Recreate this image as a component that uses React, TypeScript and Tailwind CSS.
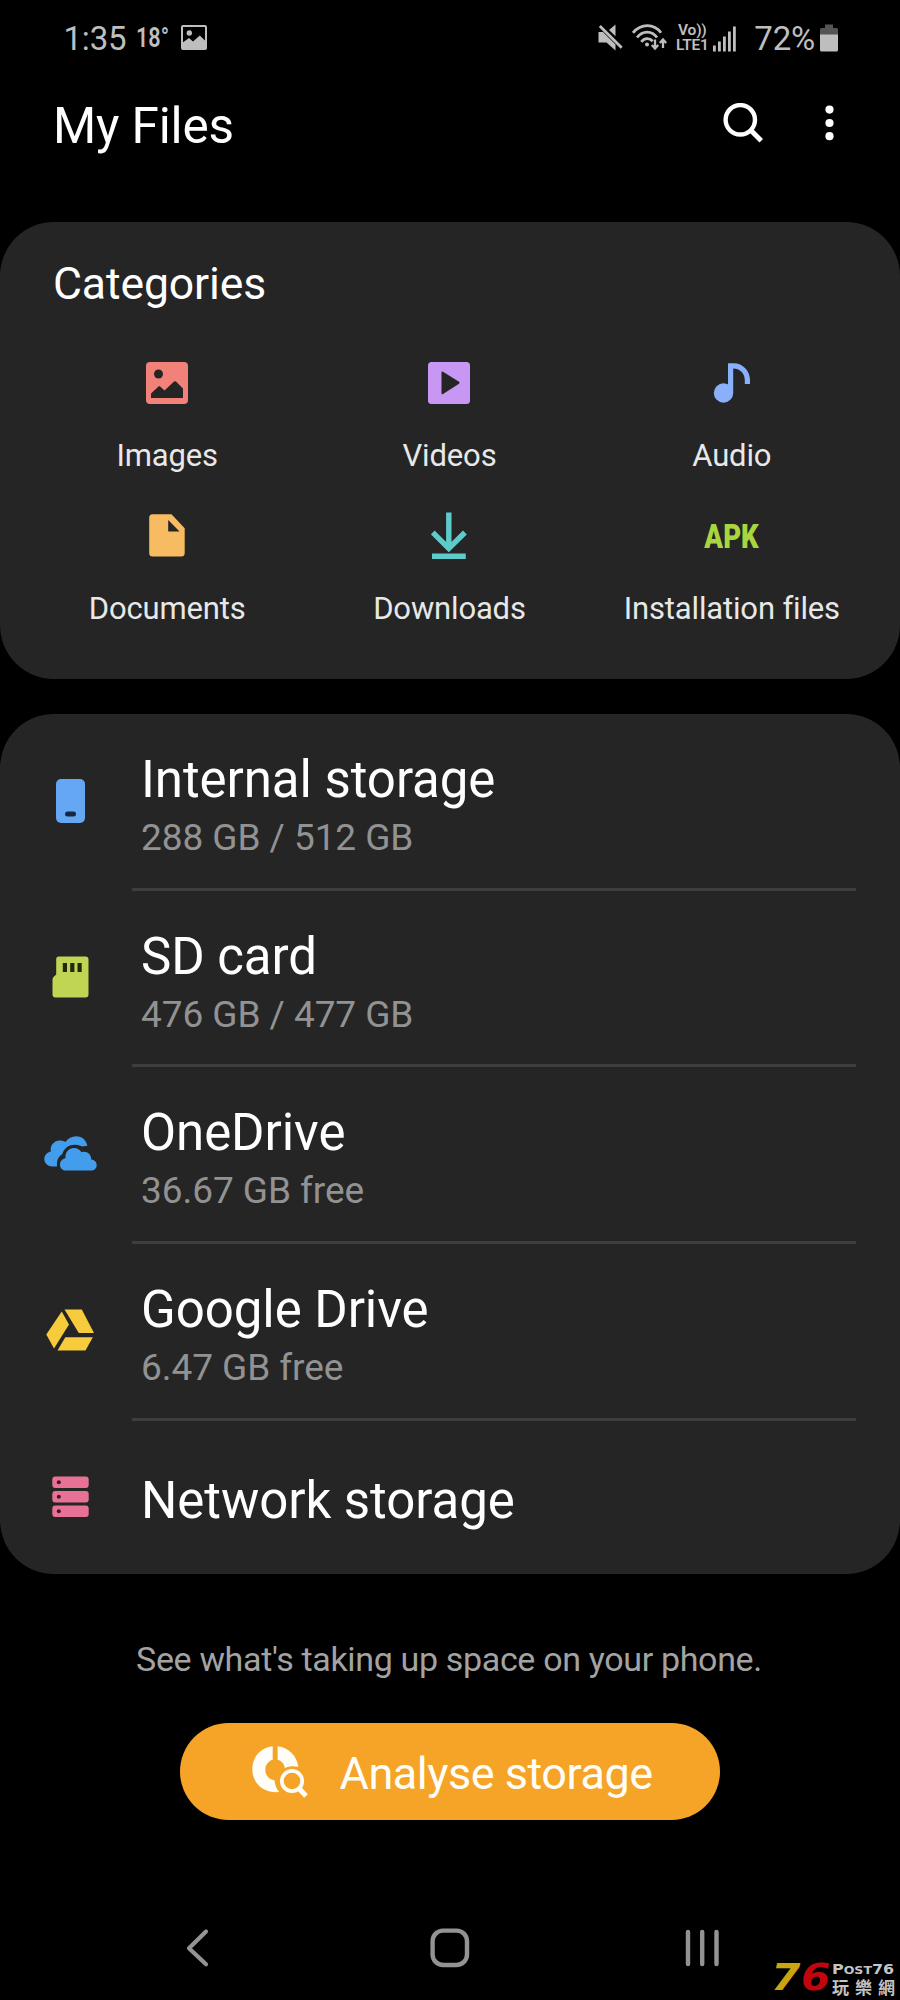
import type { ReactNode } from 'react'

const categories: { label: string; icon: ReactNode }[] = [
  { label: 'Images', icon: <ImagesIcon /> },
  { label: 'Videos', icon: <VideosIcon /> },
  { label: 'Audio', icon: <AudioIcon /> },
  { label: 'Documents', icon: <DocumentsIcon /> },
  { label: 'Downloads', icon: <DownloadsIcon /> },
  {
    label: 'Installation files',
    icon: (
      <span className="inline-block origin-center scale-x-[0.81] text-[34px] leading-none font-black text-[#a9d63e]">
        APK
      </span>
    ),
  },
]

const storages: { name: string; detail: string; icon: ReactNode }[] = [
  { name: 'Internal storage', detail: '288 GB / 512 GB', icon: <PhoneIcon /> },
  { name: 'SD card', detail: '476 GB / 477 GB', icon: <SdCardIcon /> },
  { name: 'OneDrive', detail: '36.67 GB free', icon: <OneDriveIcon /> },
  { name: 'Google Drive', detail: '6.47 GB free', icon: <GoogleDriveIcon /> },
]

function ImagesIcon() {
  return (
    <svg width="42" height="42" viewBox="0 0 42 42">
      <rect width="42" height="42" rx="4" fill="#f28279" />
      <circle cx="12.5" cy="12" r="4.5" fill="#252525" />
      <path
        d="M5 36V31.5L12.5 24.5Q13.3 23.7 14.2 24.5L18.5 28.5L28 19.6Q29 18.7 30 19.6L37 26.5V36Z"
        fill="#252525"
      />
    </svg>
  )
}

function VideosIcon() {
  return (
    <svg width="42" height="42" viewBox="0 0 42 42">
      <rect width="42" height="42" rx="3.5" fill="#c797f3" />
      <path
        d="M13.5 10.5Q13.5 9 15 9.8L31 19.8Q32.2 20.8 31 21.8L15 32Q13.5 32.8 13.5 31.2Z"
        fill="#252525"
      />
    </svg>
  )
}

function AudioIcon() {
  return (
    <svg width="38" height="40" viewBox="0 0 38 40">
      <circle cx="10.5" cy="30" r="9.7" fill="#8ab0fc" />
      <path
        d="M15 30V0.3H20.5C30 0.3 37 8 37 17V21H31.8V17C31.8 10.5 27 5.6 20.2 5.6V30Z"
        fill="#8ab0fc"
      />
    </svg>
  )
}

function DocumentsIcon() {
  return (
    <svg width="36" height="43" viewBox="0 0 36 43">
      <path
        d="M3.5 0.3H22.5L35.7 14.3V39Q35.7 42.5 32.2 42.5H3.5Q0.2 42.5 0.2 39V3.8Q0.2 0.3 3.5 0.3ZM19.2 6V17.5H30.5Z"
        fill="#f7bb61"
        fillRule="evenodd"
      />
    </svg>
  )
}

function DownloadsIcon() {
  return (
    <svg width="36" height="48" viewBox="0 0 36 48" fill="none" stroke="#5ecbcb" strokeWidth="5.4">
      <path d="M17.8 0.5V37M1.7 20.5L17.8 36.5L33.9 20.5" />
      <path d="M1 44.3H34.8" />
    </svg>
  )
}

function PhoneIcon() {
  return (
    <svg className="translate-y-px" width="29" height="44" viewBox="0 0 29 44">
      <rect width="29" height="44" rx="5" fill="#66a7f3" />
      <rect x="9" y="32.5" width="11" height="5" rx="2.5" fill="#16283f" />
    </svg>
  )
}

function SdCardIcon() {
  return (
    <svg width="37" height="42" viewBox="0 0 37 42">
      <path
        d="M7 0.5H33.5Q36.5 0.5 36.5 3.5V38.5Q36.5 41.5 33.5 41.5H3.5Q0.5 41.5 0.5 38.5V23.5Q0.5 22 1.5 21L4.2 18.6V3.3Q4.2 0.5 7 0.5Z"
        fill="#c0d553"
      />
      <path d="M10.8 7H15V16H10.8ZM18.2 7H22.4V16H18.2ZM25.5 7H29.7V16H25.5Z" fill="#25280f" />
    </svg>
  )
}

function OneDriveIcon() {
  return (
    <svg width="53" height="35" viewBox="0 0 53 35">
      <path
        d="M8.5 30.5C3.8 30.5 0.3 27.3 0.3 23C0.3 19.2 3 16.2 6.8 15.4C5.8 9.5 10 4.5 15.8 4.5C17.8 4.5 19.8 5 21.5 6C24 2.4 28 0.3 32.2 0.3C38 0.3 42.7 4.3 43.3 10.3C41 9.8 39.5 10 38.2 10.6C30.5 6.8 21 8.8 18.2 18.3C14.5 20.3 12.5 24.5 13 30.5Z"
        fill="#429eec"
      />
      <path
        d="M21.5 34.6C18.3 34.6 16 32 16 28.8C16 25.4 18.2 22.8 21.5 22.3C20.8 16.5 24.8 12.1 30 12.1C33.2 12.1 36 13.7 37.5 16.3C42 14.6 47.3 17.5 47.3 23.6C50.5 24 52.7 26.2 52.7 29.2C52.7 32.3 50.2 34.6 47 34.6Z"
        fill="#429eec"
      />
    </svg>
  )
}

function GoogleDriveIcon() {
  return (
    <svg className="-translate-x-px" width="48" height="42" viewBox="0 0 48 42" fill="#f7cc3c">
      <path d="M18.5 0.4H35.8L48 24H32.8Z" />
      <path d="M15.7 2.5L23 15.4L8 39.5L0.3 25.5Z" />
      <path d="M19.3 28.2H46.8L39.5 41.5H11.5Z" />
    </svg>
  )
}

function NetworkIcon() {
  return (
    <svg width="37" height="42" viewBox="0 0 37 42">
      {[0.5, 15, 29.5].map((y) => (
        <g key={y}>
          <rect x="0.3" y={y} width="36.4" height="11.5" rx="3" fill="#e87296" />
          <circle cx="6.8" cy={y + 5.7} r="2" fill="#4a1024" />
        </g>
      ))}
    </svg>
  )
}

function AnalyseIcon() {
  return (
    <svg width="56" height="52" viewBox="0 0 56 52">
      <path
        d="M20.7 0.3V13.8C16.3 15 13.3 19 13.3 23.7C13.3 29.5 17.6 33.7 22.5 34.3C22.8 38.7 24.5 42.8 27.3 46C12 47.5 0.3 37.5 0.3 23.2C0.3 10.8 9 1.5 20.7 0.3Z"
        fill="#fffdf8"
      />
      <path
        d="M25.6 0.3C36.8 1.5 45 10 46.3 20.8C41 19.8 36.3 20.3 32.8 22.2C32.3 17.8 29.5 14.8 25.6 13.8Z"
        fill="#fffdf8"
      />
      <circle cx="40" cy="35" r="10.2" fill="none" stroke="#fffdf8" strokeWidth="3.8" />
      <path d="M46.6 42L54 50" stroke="#fffdf8" strokeWidth="5" />
    </svg>
  )
}

function StatusBar() {
  return (
    <div className="flex h-[77px] items-center pr-[62px] pl-[63.5px] text-[#bebebe]">
      <span className="text-[33px] leading-none tracking-[-0.2px]">1:35</span>
      <span className="ml-[10px] w-[34px] origin-left scale-x-[0.8] text-[27px] leading-none font-semibold">
        18°
      </span>
      <svg className="ml-[10.5px] -translate-y-px" width="26" height="25" viewBox="0 0 26 25">
        <rect x="1" y="1" width="24" height="23" rx="1" fill="none" stroke="#bebebe" strokeWidth="2" />
        <circle cx="8.3" cy="8" r="2.7" fill="#bebebe" />
        <path d="M1 18L8 13L12 16.5L18.8 10.5L25 16.5V24H1Z" fill="#bebebe" />
      </svg>

      <div className="ml-auto flex items-center">
        <svg className="-translate-y-px" width="25" height="27" viewBox="0 0 25 27" fill="#bebebe">
          <path d="M0.5 8H5L17.5 20.5V26.5L8.5 18.5H0.5Z" />
          <path d="M17.5 0.5V12.2L11 6Z" />
          <path d="M1.8 2L23.7 23.8" stroke="#bebebe" strokeWidth="2.8" />
        </svg>
        <svg className="ml-[9px] -translate-y-px" width="35" height="27" viewBox="0 0 35 27" fill="none" stroke="#bebebe" strokeWidth="2.8">
          <path d="M1 8.8C9 -0.8 22 -0.8 29 8.8" />
          <path d="M5 13.5C10.5 6.2 20 6.2 25 13.5" />
          <path d="M9.3 17.8C12.5 13.6 17.5 13.6 20.7 17.2" />
          <circle cx="15" cy="20.5" r="1" strokeWidth="2" />
          <path d="M23 15.5V24.5M19.8 21L23 24.5L26.2 21M31 24V15.5M27.8 19L31 15.5L34.2 19" strokeWidth="2.3" />
        </svg>
        <div className="ml-[8px] flex w-[34px] -translate-y-px flex-col items-center text-[15.5px] leading-[14.5px] font-semibold tracking-[-0.2px]">
          <span>Vo))</span>
          <span>LTE1</span>
        </div>
        <svg className="ml-[4px]" width="23" height="26" viewBox="0 0 23 26" fill="#bebebe">
          <rect x="0" y="19.5" width="2.8" height="6" />
          <rect x="5" y="15.5" width="2.8" height="10" />
          <rect x="10" y="10.5" width="2.8" height="15" />
          <rect x="15" y="5.5" width="2.8" height="20" />
          <rect x="20" y="0.5" width="2.8" height="25" />
        </svg>
        <span className="ml-[18px] text-[33px] leading-none tracking-[-0.2px]">72%</span>
        <svg className="ml-[5px] -translate-y-px" width="18" height="28" viewBox="0 0 18 28">
          <path d="M5 0.5H13V4H16.5Q18 4 18 5.5V11H0V5.5Q0 4 1.5 4H5Z" fill="#555" />
          <path d="M0 10.5H18V26Q18 27.5 16.5 27.5H1.5Q0 27.5 0 26Z" fill="#bebebe" />
        </svg>
      </div>
    </div>
  )
}

function Header() {
  return (
    <header className="flex h-[145px] items-start pr-[66px] pl-[53px]">
      <h1 className="mt-[18.5px] text-[49.5px] leading-[60px] tracking-[-0.15px]">My Files</h1>
      <svg className="mt-[26px] ml-auto" width="40" height="40" viewBox="0 0 40 40" fill="none" stroke="#fff">
        <circle cx="17.3" cy="16.8" r="14.7" strokeWidth="4.4" />
        <path d="M27.8 27.3L38.3 37.8" strokeWidth="5" />
      </svg>
      <svg className="mt-[28px] ml-[62px]" width="9" height="36" viewBox="0 0 9 36" fill="#fff">
        <circle cx="4.5" cy="4.6" r="4.1" />
        <circle cx="4.5" cy="18" r="4.1" />
        <circle cx="4.5" cy="31.2" r="4.1" />
      </svg>
    </header>
  )
}

function Watermark() {
  return (
    <div className="absolute right-[5px] bottom-0 flex h-[44px] w-[124px] items-end">
      <div className="flex w-[61px] font-['DejaVu_Sans',sans-serif] text-[37px] leading-[44px] font-bold whitespace-nowrap italic">
        <span className="w-[29.5px] origin-left scale-x-[1.14] text-[#cda410]">7</span>
        <span className="w-[26px] origin-left scale-x-[1.14] text-[#c1070d]">6</span>
      </div>
      <div className="flex w-[63px] flex-col pb-[5px] text-[#c4c4c4]">
        <span className="w-[56px] origin-left scale-x-[1.14] font-['DejaVu_Sans',sans-serif] text-[14px] leading-[15px] font-bold whitespace-nowrap">
          P<span className="text-[11px]">OST</span>76
        </span>
        <span className="flex justify-between font-['Noto_Sans_CJK_TC',sans-serif] text-[17px] leading-[17px] font-bold">
          <span>玩</span>
          <span>樂</span>
          <span>網</span>
        </span>
      </div>
    </div>
  )
}

function App() {
  return (
    <div className="relative flex h-[2000px] w-[900px] flex-col overflow-hidden bg-black font-[Roboto,sans-serif] text-white">
      <StatusBar />
      <Header />

      <section className="h-[457px] rounded-[54px] bg-[#252525] pt-[35.5px]">
        <h2 className="pl-[53px] text-[44.5px] leading-[52px] tracking-[-0.1px]">Categories</h2>
        <div className="mt-[49.5px] grid grid-cols-3 gap-y-[37.5px] pr-[27px] pl-[26px]">
          {categories.map((item) => (
            <div key={item.label} className="flex flex-col items-center">
              <div className="flex h-12 items-center justify-center">{item.icon}</div>
              <span className="mt-[31px] text-[31px] leading-[36px] tracking-[-0.15px] whitespace-nowrap text-[#e8e8e8]">
                {item.label}
              </span>
            </div>
          ))}
        </div>
      </section>

      <section className="mt-[35px] h-[860px] rounded-[54px] bg-[#252525]">
        {storages.map((item) => (
          <div key={item.name} className="flex h-[176.67px]">
            <div className="flex w-[132px] items-center justify-center pb-[4px] pl-[9px]">{item.icon}</div>
            <div className="mr-[44px] flex-1 border-b-[3px] border-[#3e3e3e] pt-[36px] pl-[9px]">
              <p className="text-[51px] leading-[60px] tracking-[-0.06px]">{item.name}</p>
              <p className="mt-[6px] text-[37px] leading-[44px] tracking-[-0.06px] text-[#929292]">{item.detail}</p>
            </div>
          </div>
        ))}
        <div className="flex h-[152px]">
          <div className="flex w-[132px] items-center justify-center pl-[9px]">
            <NetworkIcon />
          </div>
          <p className="pt-[50px] pl-[9px] text-[51px] leading-[60px] tracking-[-0.06px]">Network storage</p>
        </div>
      </section>

      <p className="mt-[65px] pr-[2px] text-center text-[34px] leading-[40px] tracking-[-0.34px] text-[#a3a3a3]">
        See what's taking up space on your phone.
      </p>
      <button className="mx-auto mt-[44px] flex h-[97px] w-[540px] items-center rounded-full bg-[#f5a428] pl-[72px] text-[#fffdf8]">
        <AnalyseIcon />
        <span className="mt-[4px] ml-[31.5px] text-[45px] leading-[52px] tracking-[-0.48px]">Analyse storage</span>
      </button>

      <nav className="mt-[108px] flex h-10 items-center pl-[186px]">
        <svg width="23" height="40" viewBox="0 0 23 40" fill="none" stroke="#939393" strokeWidth="4.2" strokeLinecap="round" strokeLinejoin="round">
          <path d="M20 3.5L3 20.2L20 36.3" />
        </svg>
        <svg className="ml-[221px]" width="40" height="40" viewBox="0 0 40 40" fill="none" stroke="#939393" strokeWidth="4.4">
          <rect x="2.6" y="2.6" width="34.4" height="34.4" rx="10.5" />
        </svg>
        <svg className="ml-[215px]" width="36" height="40" viewBox="0 0 36 40" stroke="#939393" strokeWidth="4.4" strokeLinecap="round">
          <path d="M3 4V36M17.2 4V36M31.5 4V36" />
        </svg>
      </nav>

      <Watermark />
    </div>
  )
}

export default App
